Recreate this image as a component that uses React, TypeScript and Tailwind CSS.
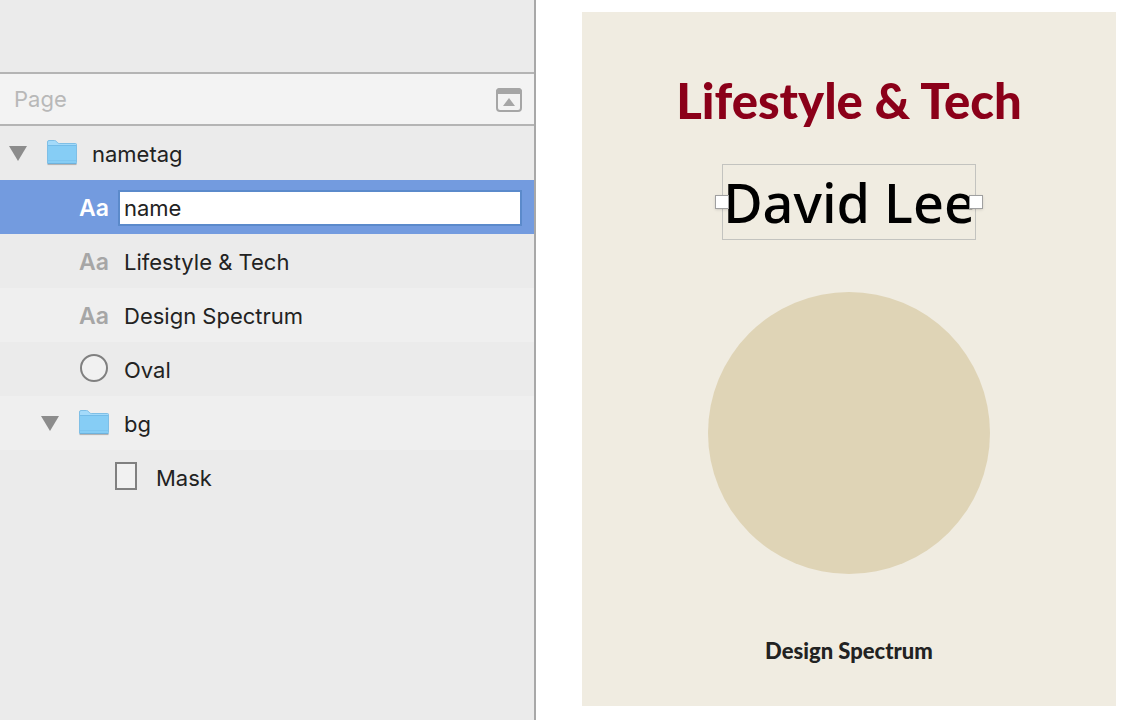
import { useState } from "react";

type Kind = "folder" | "text" | "oval" | "rect";

interface Layer {
  id: string;
  name: string;
  kind: Kind;
  indent: string;
  row: string;
  editing?: boolean;
}

const layers: Layer[] = [
  { id: "nametag", name: "nametag", kind: "folder", indent: "pl-2", row: "bg-[#ebebeb]" },
  { id: "name", name: "name", kind: "text", indent: "pl-10", row: "bg-[#739bdf]", editing: true },
  { id: "lifestyle", name: "Lifestyle & Tech", kind: "text", indent: "pl-10", row: "bg-[#ebebeb]" },
  { id: "spectrum", name: "Design Spectrum", kind: "text", indent: "pl-10", row: "bg-[#efefef]" },
  { id: "oval", name: "Oval", kind: "oval", indent: "pl-10", row: "bg-[#ebebeb]" },
  { id: "bg", name: "bg", kind: "folder", indent: "pl-10", row: "bg-[#efefef]" },
  { id: "mask", name: "Mask", kind: "rect", indent: "pl-[72px]", row: "bg-[#ebebeb]" },
];

function FolderIcon() {
  return (
    <svg width="32" height="28" viewBox="0 -1 32 28" aria-hidden="true">
      <path d="M1.5 25.5h29" stroke="#b4b4b4" strokeWidth="1.2" />
      <path
        d="M1.5 24V3Q1.5 1.5 3 1.5H8.5Q9.6 1.5 10.4 2.4L11.6 3.8Q12.2 4.5 13.2 4.5H29.5Q30.5 4.5 30.5 5.5V23.5Q30.5 24.5 29.5 24.5H2.5Q1.5 24.5 1.5 23.5Z"
        fill="#a3dafa"
        stroke="#7fbfe6"
      />
      <path d="M2 7H30V24H2Z" fill="#86cdf5" />
      <path d="M2 6.5H30" stroke="#74bce8" />
      <path d="M2 21.5H30" stroke="#7dc5ef" />
      <path d="M1.5 24.5H30.5" stroke="#6fb2dc" />
    </svg>
  );
}

function LayerIcon({ kind, active }: { kind: Kind; active?: boolean }) {
  if (kind === "folder") return <FolderIcon />;
  if (kind === "text") {
    return (
      <span
        aria-hidden="true"
        className={"pt-1 text-[23px] font-semibold " + (active ? "text-white" : "text-[#a6a6a6]")}
      >
        Aa
      </span>
    );
  }
  return (
    <svg width="32" height="30" viewBox="0 0 32 30" fill="#f1f1f1" stroke="#808080" strokeWidth="2" aria-hidden="true">
      {kind === "oval" ? <circle cx="16" cy="15" r="13" /> : <rect x="6" y="2" width="20" height="26" />}
    </svg>
  );
}

function LayerRow({ layer }: { layer: Layer }) {
  const [name, setName] = useState(layer.name);
  return (
    <li className={"flex h-[54px] items-center pr-3 " + layer.indent + " " + layer.row}>
      <div className="mr-[18px] flex w-5 shrink-0 justify-center">
        {layer.kind === "folder" && (
          <button type="button" aria-label={"Collapse " + layer.name}>
            <svg width="18" height="15" viewBox="0 0 18 15" className="block" aria-hidden="true">
              <path d="M0 0H18L9 15Z" fill="#8c8c8c" />
            </svg>
          </button>
        )}
      </div>
      <div className="mr-3.5 flex w-8 shrink-0 items-center justify-center pb-0.5">
        <LayerIcon kind={layer.kind} active={layer.editing} />
      </div>
      {layer.editing ? (
        <input
          type="text"
          aria-label="Layer name"
          value={name}
          onChange={(e) => setName(e.target.value)}
          className="-ml-1.5 mt-0.5 h-9 min-w-0 flex-1 border-2 border-[#5b8acb] bg-white px-1 text-[22px] text-[#222] outline-none"
        />
      ) : (
        <span className="pt-0.5 text-[22px]">{layer.name}</span>
      )}
    </li>
  );
}

export default function App() {
  return (
    <div className="flex min-h-screen bg-white font-['Inter','Liberation_Sans',sans-serif] text-[#222]">
      <aside className="w-[536px] shrink-0 border-r-2 border-[#a8a8a8] bg-[#ebebeb]">
        <header className="mt-[72px] flex h-[54px] items-center justify-between border-y-2 border-[#b4b4b4] bg-[#f3f3f3] pr-3 pl-3.5">
          <h2 className="text-[22px] text-[#b8b8b8]">Page</h2>
          <button type="button" aria-label="Hide pages" className="pt-0.5">
            <svg width="26" height="24" viewBox="0 0 26 24" className="block" aria-hidden="true">
              <rect x="1" y="1" width="24" height="22" rx="3" fill="none" stroke="#a6a6a6" strokeWidth="2" />
              <path d="M0 6V4Q0 0 4 0H22Q26 0 26 4V6Z" fill="#a6a6a6" />
              <path d="M13 10L19 18H7Z" fill="#a6a6a6" />
            </svg>
          </button>
        </header>
        <ul>
          {layers.map((layer) => (
            <LayerRow key={layer.id} layer={layer} />
          ))}
        </ul>
      </aside>
      <main className="flex flex-1 pt-3 pr-3.5 pb-3.5 pl-[46px]">
        <article className="flex flex-1 flex-col items-center bg-[#f0ece1] pt-[58px]">
          <h1 className="font-['Lato',sans-serif] text-[49px] leading-[60px] font-black whitespace-nowrap text-[#8b0019]">
            Lifestyle &amp; Tech
          </h1>
          <div className="relative mt-[34px] border border-[#c3c3bf]">
            <p className="font-['Noto_Sans',sans-serif] text-[54px] leading-[74px] font-medium whitespace-nowrap text-black">
              David Lee
            </p>
            <span className="absolute top-[30px] -left-2 size-[14px] border border-[#a0a0a0] bg-white shadow" />
            <span className="absolute top-[30px] -right-2 size-[14px] border border-[#a0a0a0] bg-white shadow" />
          </div>
          <div className="mt-[52px] size-[282px] rounded-full bg-[#dfd4b6]" />
          <p className="mt-[63px] font-['Lato',sans-serif] text-[22px] leading-[28px] font-black whitespace-nowrap">
            Design Spectrum
          </p>
        </article>
      </main>
    </div>
  );
}
